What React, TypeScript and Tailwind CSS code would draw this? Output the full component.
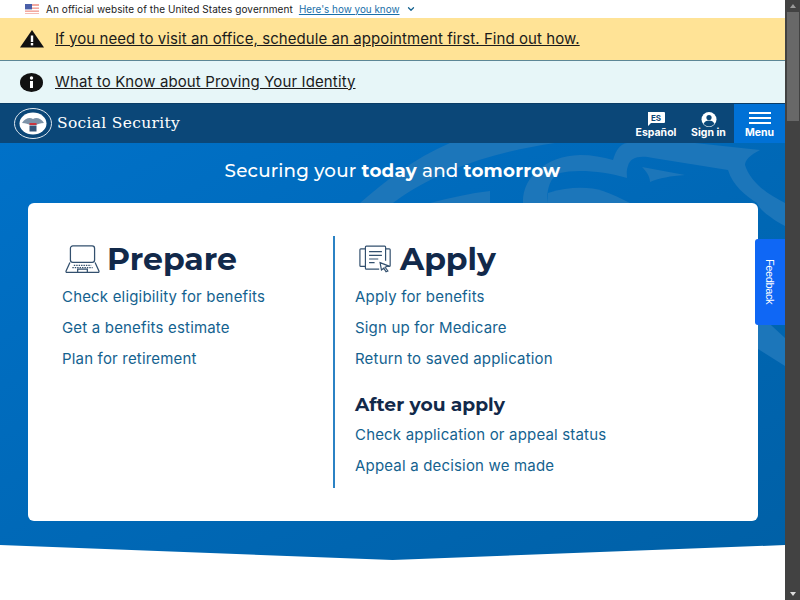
import { ChevronDown } from "lucide-react";

const sans = "font-['Inter','Noto_Sans',sans-serif]";
const heading = "font-['Montserrat','Inter',sans-serif]";

const prepareLinks = ["Check eligibility for benefits", "Get a benefits estimate", "Plan for retirement"];
const applyLinks = ["Apply for benefits", "Sign up for Medicare", "Return to saved application"];
const afterLinks = ["Check application or appeal status", "Appeal a decision we made"];

function Flag() {
  return (
    <svg width="14" height="10" viewBox="0 0 14 10" className="shrink-0">
      <rect width="14" height="10" fill="#f3a9a0" />
      <rect y="2" width="14" height="1.4" fill="#fff" />
      <rect y="5" width="14" height="1.4" fill="#fff" />
      <rect y="8" width="14" height="1.2" fill="#fff" />
      <rect width="7" height="5.4" fill="#4a5fa8" />
    </svg>
  );
}

function Seal() {
  return (
    <svg width="38" height="31" viewBox="0 0 38 31" className="shrink-0">
      <ellipse cx="19" cy="15.5" rx="18.5" ry="15" fill="#0b4778" stroke="#dfe8f0" strokeWidth="1" />
      <ellipse cx="19" cy="15.5" rx="13.500" ry="11" fill="#fff" />
      <path d="M8 15c3-5 8-6 11-4 3-2 8-1 11 4-4 0-6 1-8 2h-6c-2-1-4-2-8-2z" fill="#7d93a8" />
      <rect x="15.500" y="15" width="7" height="2" fill="#c9353f" />
      <rect x="15.500" y="17.500" width="7" height="6" fill="#33557a" />
    </svg>
  );
}

function Laptop() {
  return (
    <svg width="35" height="29" viewBox="0 0 36 30" fill="none" stroke="#33506e" strokeWidth="1.3" className="shrink-0">
      <rect x="5.500" y="1" width="25" height="17" rx="2.500" />
      <path d="M5 18 1 27a1 1 0 0 0 1 1.400h32a1 1 0 0 0 1-1.400l-4-9" />
      <path d="M13 28v-3h10v3" />
      <path d="M9 21h18M7.500 23.500h21" strokeDasharray="1.500 1" />
    </svg>
  );
}

function Papers() {
  return (
    <svg width="33" height="28" viewBox="0 0 36 30" fill="none" stroke="#33506e" strokeWidth="1.3" className="shrink-0">
      <path d="M7 4H2a1 1 0 0 0-1 1v17a1 1 0 0 0 1 1h5" />
      <path d="M29 4h4a1 1 0 0 1 1 1v17a1 1 0 0 1-1 1h-3" />
      <path d="M22 26H8a1 1 0 0 1-1-1V2a1 1 0 0 1 1-1h20a1 1 0 0 1 1 1v15" />
      <path d="M11 7h14M11 11h14M11 15h10M11 19h6" />
      <path d="m23 19 9 3.500-3.500 1.500 3 4-2 1-2.500-4-2.500 2z" fill="#fff" />
    </svg>
  );
}

function Backdrop() {
  return (
    <svg width="785" height="417" viewBox="0 0 785 417" fill="#1c76ba" className="absolute inset-0">
      <path d="M360 60C385 38 415 15 450 0L555 0C500 8 440 25 393 60Z" />
      <path d="M430 60C450 55 470 50 490 48L490 60Z" />
      <path d="M523 60C522 35 545 13 580 12C592 12 603 14 613 17C616 7 620 1 627 0L695 0L760 7C750 12 745 17 745 22C750 38 765 50 785 60L785 83C770 75 760 67 757 60C745 52 733 43 728 27L653 15C640 12 630 14 628 23C626 28 627 32 627 35C605 28 575 26 560 30C550 34 547 45 547 60Z" />
      <path d="M548 50C570 43 590 44 603 48C612 51 620 55 630 60L547 60Z" />
      <path d="M642 24L685 32C670 33 660 35 650 39C650 33 646 28 642 24Z" />
      <path d="M758 170L785 195L785 223L758 206Z" />
    </svg>
  );
}

function LinkList({ items }: { items: string[] }) {
  return (
    <ul className="flex flex-col gap-[10px]">
      {items.map((t) => (
        <li key={t} className="text-[15px] leading-[21px] tracking-[0.18px] text-[#14628f]">
          <a href="#">{t}</a>
        </li>
      ))}
    </ul>
  );
}

export default function App() {
  return (
    <div className={`flex h-[600px] w-[800px] overflow-hidden bg-white ${sans}`}>
      <div className="relative w-[785px] shrink-0">
        <div className="flex h-[18px] items-center gap-[6px] pl-[25px] text-[10px] text-[#1b1b1b]">
          <Flag />
          <span className="ml-[1px] tracking-[0.08px]">An official website of the United States government</span>
          <a href="#" className="text-[9.9px] text-[#1a6fa8] underline">Here's how you know</a>
          <ChevronDown size={10} strokeWidth={3} className="text-[#14628f]" />
        </div>

        <div className="flex h-[43px] items-center gap-[11px] border-b border-[#5d8796] bg-[#ffe396] pl-[20px] text-[15px] tracking-[0.07px] text-[#1b1b1b]">
          <svg width="24" height="18" viewBox="0 0 24 18">
            <path d="M12 0 24 17.500H0z" fill="#111" />
            <rect x="10.800" y="5.500" width="2.400" height="6.500" fill="#fff" />
            <rect x="10.800" y="13" width="2.400" height="2.400" fill="#fff" />
          </svg>
          <a href="#" className="underline">If you need to visit an office, schedule an appointment first. Find out how.</a>
        </div>

        <div className="flex h-[42px] items-center gap-[12px] bg-[#e7f6f8] pl-[20px] text-[15px] tracking-[0.12px] text-[#1b1b1b]">
          <svg width="23" height="19" viewBox="0 0 23 19">
            <ellipse cx="11.500" cy="9.500" rx="11.500" ry="9.500" fill="#111" />
            <rect x="10" y="8" width="3" height="7" fill="#fff" />
            <circle cx="11.500" cy="5" r="1.700" fill="#fff" />
          </svg>
          <a href="#" className="underline">What to Know about Proving Your Identity</a>
        </div>

        <header className="flex h-[40px] items-center justify-between border-t border-[#0a3c66] bg-[#0b4778] pl-[14px] text-white">
          <div className="flex items-center gap-[5px]">
            <Seal />
            <span className="font-['DejaVu_Serif',serif] text-[15.5px] tracking-[0.3px]">Social Security</span>
          </div>
          <div className="flex h-full items-stretch">
            <a href="#" className="flex w-[44px] flex-col items-center justify-end pb-[4px] text-[10.5px] font-bold leading-[12px]">
              <svg width="18" height="14" viewBox="0 0 18 14">
                <path d="M1 0h16a1 1 0 0 1 1 1v9a1 1 0 0 1-1 1H4l-3 3z" fill="#fff" />
                <text x="9" y="8.500" textAnchor="middle" fontSize="8" fontWeight="700" fill="#0b4778" fontFamily="Inter">ES</text>
              </svg>
              <span className="mt-[1px]">Español</span>
            </a>
            <a href="#" className="ml-[9px] flex w-[43px] flex-col items-center justify-end pb-[4px] text-[10.5px] font-bold leading-[12px]">
              <svg width="18" height="15" viewBox="0 0 18 15">
                <circle cx="9" cy="7.500" r="7.500" fill="#fff" />
                <circle cx="9" cy="5.500" r="2.600" fill="#0b4778" />
                <path d="M3.500 12c1-2.500 3-3.500 5.500-3.500s4.500 1 5.500 3.500a7.500 7.500 0 0 1-11 0z" fill="#0b4778" />
              </svg>
              <span>Sign in</span>
            </a>
            <a href="#" className="ml-[4px] flex w-[51px] flex-col items-center justify-end bg-[#0071d6] pb-[4px] text-[10.5px] font-bold leading-[12px]">
              <svg width="22" height="13" viewBox="0 0 22 13" fill="#fff" className="mb-[2px]">
                <rect y="0" width="22" height="2" />
                <rect y="5" width="22" height="2" />
                <rect y="10" width="22" height="2" />
              </svg>
              <span>Menu</span>
            </a>
          </div>
        </header>

        <section className="relative h-[417px] overflow-hidden bg-gradient-to-br from-[#0071c8] to-[#0060a6] [clip-path:polygon(0_402px,50%_100%,100%_402px,100%_0,0_0)]">
          <Backdrop />
          <div className="relative flex h-[60px] items-center justify-center pb-[5px] text-[18.3px] tracking-[0.2px] text-white">
            <h1 className={`${heading} font-medium`}>
              Securing your <b className="font-bold">today</b> and <b className="font-bold">tomorrow</b>
            </h1>
          </div>
          <div className="relative mx-[28px] flex h-[318px] w-[730px] rounded-[6px] bg-white pt-[33px]">
            <div className="h-[252px] w-[305px] shrink-0 pl-[34px] pt-[6px]">
              <div className="flex items-center gap-[7px] pl-[3px]">
                <Laptop />
                <h2 className={`${heading} text-[31.5px] font-bold leading-[34px] text-[#12294a]`}>Prepare</h2>
              </div>
              <div className="mt-[10px]">
                <LinkList items={prepareLinks} />
              </div>
            </div>
            <div className="h-[252px] flex-1 border-l-2 border-[#2b82c4] pl-[20px] pt-[6px]">
              <div className="flex items-center gap-[8px] pl-[4px]">
                <Papers />
                <h2 className={`${heading} text-[31.5px] font-bold leading-[34px] text-[#12294a]`}>Apply</h2>
              </div>
              <div className="mt-[10px]">
                <LinkList items={applyLinks} />
              </div>
              <h3 className={`${heading} mt-[25px] mb-[8px] text-[18.7px] font-bold leading-[22px] text-[#12294a]`}>After you apply</h3>
              <LinkList items={afterLinks} />
            </div>
          </div>
        </section>

        <a href="#" className="absolute left-[755px] top-[239px] flex h-[86px] w-[30px] items-center justify-center rounded-l-[3px] bg-[#0f67f5] font-['Liberation_Sans',sans-serif] text-[11px] tracking-[-0.4px] text-white [writing-mode:vertical-rl]">
          Feedback
        </a>
      </div>

      <div className="flex w-[15px] shrink-0 flex-col items-center bg-[#424242]">
        <div className="flex h-[12px] items-center justify-center">
          <div className="h-0 w-0 border-x-[3px] border-b-[4px] border-x-transparent border-b-[#999]" />
        </div>
        <div className="h-[109px] w-[12px] bg-[#686868]" />
        <div className="flex-1" />
        <div className="flex h-[12px] items-center justify-center">
          <div className="h-0 w-0 border-x-[3px] border-t-[4px] border-x-transparent border-t-[#ddd]" />
        </div>
      </div>
    </div>
  );
}
